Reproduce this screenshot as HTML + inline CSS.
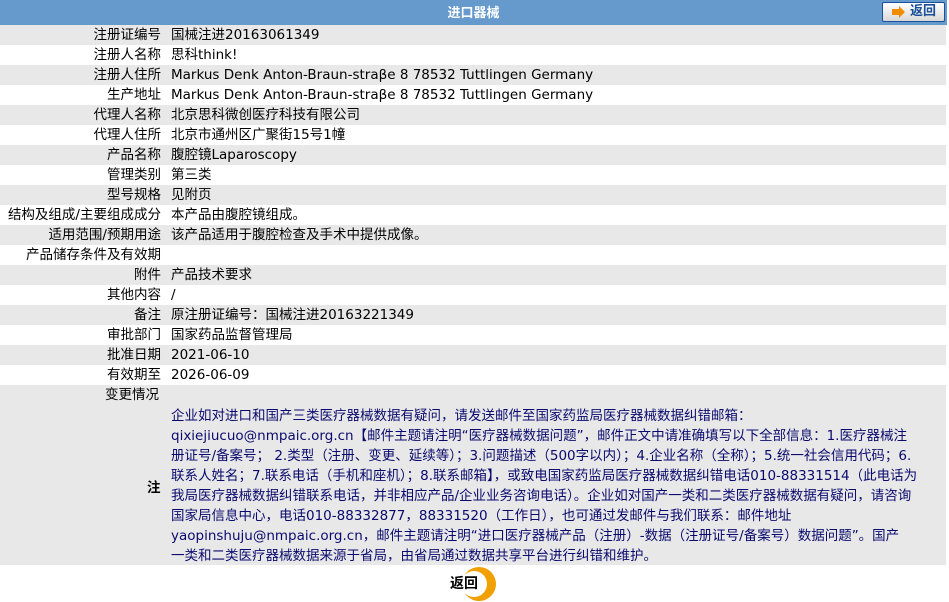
<!DOCTYPE html>
<html><head><meta charset="utf-8"><style>
body{margin:0;width:949px;height:602px;overflow:hidden;background:#fff;font-family:"DejaVu Sans","Noto Sans CJK SC",sans-serif;font-size:13.5px;color:#000}
.hd{position:absolute;left:0;top:0;width:947px;height:25px;background:#6699cc;color:#fff;font-weight:bold;font-size:13px;text-align:center;line-height:25px;font-family:"Liberation Sans","Noto Sans CJK SC",sans-serif}
.r{position:absolute;left:0;width:946px;height:20px;line-height:21px;white-space:nowrap}
.g{background:#e8e8e8}
.l{position:absolute;right:785px;top:0}
.v{position:absolute;left:171px;top:0}
.note{position:absolute;left:0;top:405px;width:946px;height:160px;background:#e8e8e8}
.nt{position:absolute;left:171px;top:1px;line-height:20px;color:#0a0a6e;white-space:nowrap;width:775px;overflow:hidden;font-feature-settings:"fwid"}
.btn{position:absolute;left:882px;top:2px;width:61px;height:18px;border:1px solid #1a4f99;border-radius:2px;background:linear-gradient(#fff,#d8d8d8);}
.btn b{position:absolute;left:27px;top:0;line-height:18px;color:#1a4f99;font-size:13px}
</style></head><body>
<div class="hd">进口器械</div>
<div class="btn"><svg width="14" height="12" style="position:absolute;left:9px;top:3px"><path d="M0 3h7V0l6 6-6 6V9H0z" fill="#f08c00"/></svg><b>返回</b></div>
<div class="r g" style="top:25px"><span class="l">注册证编号</span><span class="v">国械注进20163061349</span></div>
<div class="r" style="top:45px"><span class="l">注册人名称</span><span class="v">思科think!</span></div>
<div class="r g" style="top:65px"><span class="l">注册人住所</span><span class="v">Markus Denk Anton-Braun-straβe 8 78532 Tuttlingen Germany</span></div>
<div class="r" style="top:85px"><span class="l">生产地址</span><span class="v">Markus Denk Anton-Braun-straβe 8 78532 Tuttlingen Germany</span></div>
<div class="r g" style="top:105px"><span class="l">代理人名称</span><span class="v">北京思科微创医疗科技有限公司</span></div>
<div class="r" style="top:125px"><span class="l">代理人住所</span><span class="v">北京市通州区广聚街15号1幢</span></div>
<div class="r g" style="top:145px"><span class="l">产品名称</span><span class="v">腹腔镜Laparoscopy</span></div>
<div class="r" style="top:165px"><span class="l">管理类别</span><span class="v">第三类</span></div>
<div class="r g" style="top:185px"><span class="l">型号规格</span><span class="v">见附页</span></div>
<div class="r" style="top:205px"><span class="l">结构及组成/主要组成成分</span><span class="v">本产品由腹腔镜组成。</span></div>
<div class="r g" style="top:225px"><span class="l">适用范围/预期用途</span><span class="v">该产品适用于腹腔检查及手术中提供成像。</span></div>
<div class="r" style="top:245px"><span class="l">产品储存条件及有效期</span></div>
<div class="r g" style="top:265px"><span class="l">附件</span><span class="v">产品技术要求</span></div>
<div class="r" style="top:285px"><span class="l">其他内容</span><span class="v">/</span></div>
<div class="r g" style="top:305px"><span class="l">备注</span><span class="v">原注册证编号：国械注进20163221349</span></div>
<div class="r" style="top:325px"><span class="l">审批部门</span><span class="v">国家药品监督管理局</span></div>
<div class="r g" style="top:345px"><span class="l">批准日期</span><span class="v">2021-06-10</span></div>
<div class="r" style="top:365px"><span class="l">有效期至</span><span class="v">2026-06-09</span></div>
<div class="r g" style="top:385px"><span class="l" style="right:auto;left:105px">变更情况</span></div>
<div class="note"><span style="position:absolute;left:147px;top:71px;font-weight:bold">注</span>
<div class="nt">企业如对进口和国产三类医疗器械数据有疑问，请发送邮件至国家药监局医疗器械数据纠错邮箱：<br>qixiejiucuo@nmpaic.org.cn【邮件主题请注明“医疗器械数据问题”，邮件正文中请准确填写以下全部信息：1.医疗器械注<br>册证号/备案号； 2.类型（注册、变更、延续等）；3.问题描述（500字以内）；4.企业名称（全称）；5.统一社会信用代码；6.<br>联系人姓名；7.联系电话（手机和座机）；8.联系邮箱】，或致电国家药监局医疗器械数据纠错电话010-88331514（此电话为<br>我局医疗器械数据纠错联系电话，并非相应产品/企业业务咨询电话）。企业如对国产一类和二类医疗器械数据有疑问，请咨询<br>国家局信息中心，电话010-88332877，88331520（工作日），也可通过发邮件与我们联系：邮件地址<br>yaopinshuju@nmpaic.org.cn，邮件主题请注明“进口医疗器械产品（注册）-数据（注册证号/备案号）数据问题”。国产<br>一类和二类医疗器械数据来源于省局，由省局通过数据共享平台进行纠错和维护。</div></div>
<svg width="40" height="36" style="position:absolute;left:459px;top:566px"><circle cx="20" cy="18" r="17" fill="#f0a000"/><circle cx="15" cy="18" r="13" fill="#fff"/></svg>
<b style="position:absolute;left:450px;top:574px;font-size:14px;line-height:20px">返回</b>
</body></html>
